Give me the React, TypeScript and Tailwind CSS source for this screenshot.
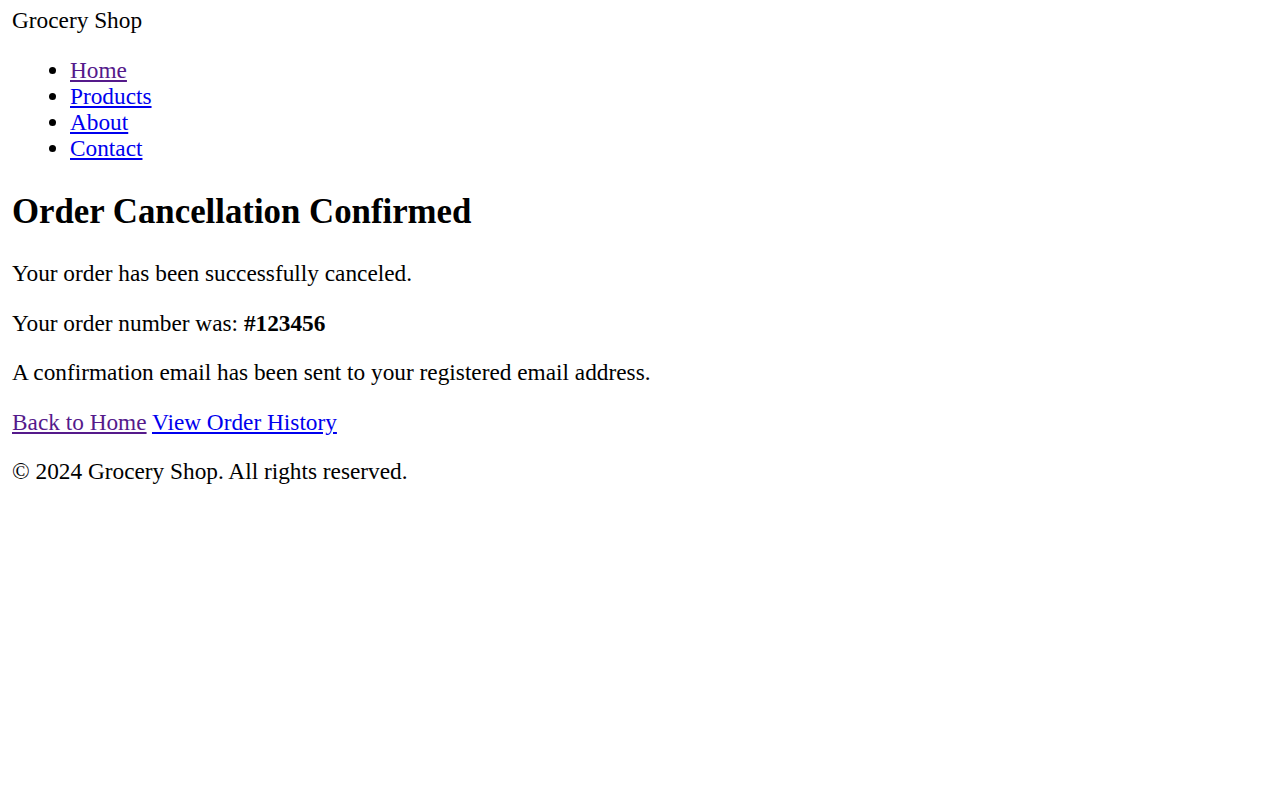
export default function App() {
  return (
    <div className="min-h-[795px] bg-white px-[12px] pt-[7px] text-[23.3px] leading-[26.5px] text-black [font-family:'Liberation_Serif',serif]">
      <header>
        <div className="h-[26px] leading-[26px]">Grocery Shop</div>
        <nav>
          <ul className="mt-[24px] mb-0 list-disc pl-[58px] leading-[26px]">
            <li><a href="#" className="text-[#551a8b] underline">Home</a></li>
            <li><a href="#" className="text-[#0000ee] underline">Products</a></li>
            <li><a href="#" className="text-[#0000ee] underline">About</a></li>
            <li><a href="#" className="text-[#0000ee] underline">Contact</a></li>
          </ul>
        </nav>
      </header>
      <main>
        <h1 className="mt-[31px] mb-[28px] text-[34.8px] leading-[40px] font-bold">Order Cancellation Confirmed</h1>
        <p className="my-[23px]">Your order has been successfully canceled.</p>
        <p className="my-[23px]">
          Your order number was: <strong className="font-bold">#123456</strong>
        </p>
        <p className="my-[23px]">A confirmation email has been sent to your registered email address.</p>
        <div className="my-[23px]">
          <a href="#" className="text-[#551a8b] underline">Back to Home</a>{" "}
          <a href="#" className="text-[#0000ee] underline">View Order History</a>
        </div>
      </main>
      <footer>
        <p className="my-[23px]">© 2024 Grocery Shop. All rights reserved.</p>
      </footer>
    </div>
  );
}
